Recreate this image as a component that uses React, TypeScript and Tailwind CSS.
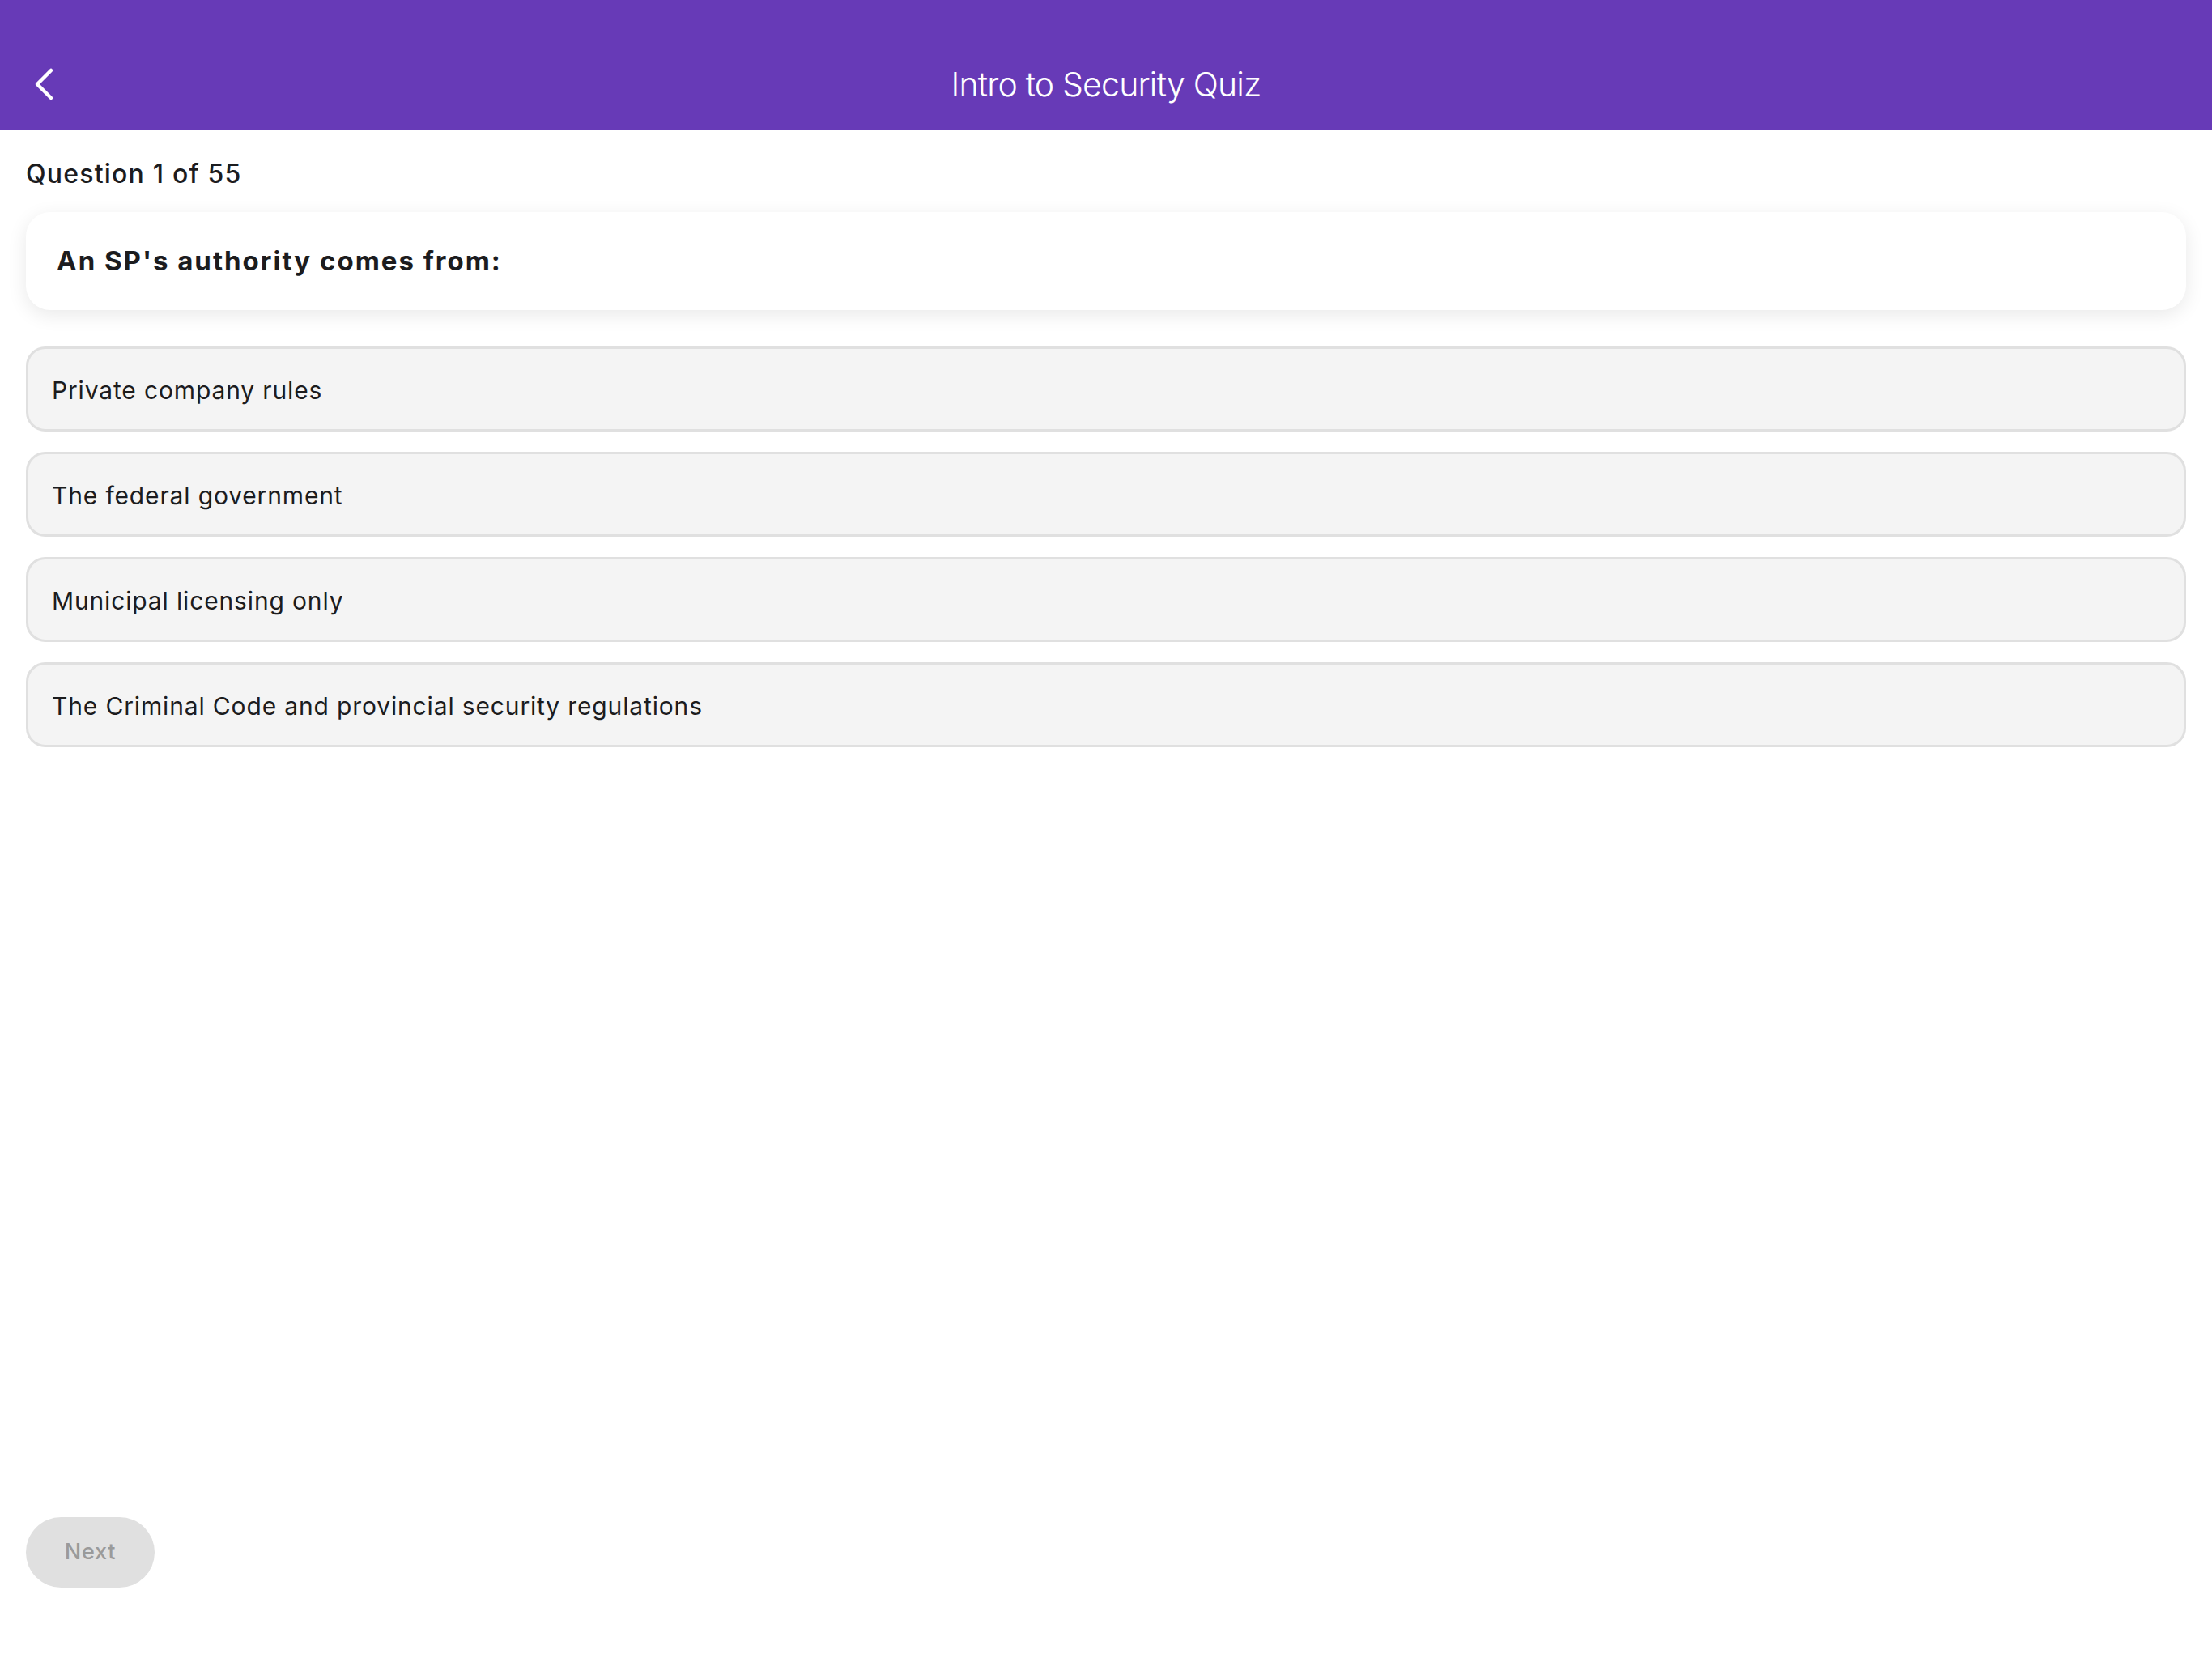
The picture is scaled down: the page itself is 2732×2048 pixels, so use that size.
import { FC } from "react";

const options = [
  "Private company rules",
  "The federal government",
  "Municipal licensing only",
  "The Criminal Code and provincial security regulations",
];

const BackIcon: FC = () => (
  <svg width="28" height="44" viewBox="0 0 28 44" fill="none">
    <path
      d="M21 5 L4 22 L21 39"
      stroke="white"
      strokeWidth="4.5"
      strokeLinecap="round"
      strokeLinejoin="round"
    />
  </svg>
);

const App: FC = () => {
  return (
    <div className="flex h-screen flex-col bg-white font-['Inter',sans-serif] text-[#1c1c1e]">
      <header className="h-[160px] shrink-0 bg-[#673ab7] pt-[50px]">
        <div className="relative flex h-[110px] items-center justify-center">
          <button className="absolute left-[42px] top-[32px]">
            <BackIcon />
          </button>
          <h1 className="text-[41px] font-light tracking-[-0.8px] text-white">
            Intro to Security Quiz
          </h1>
        </div>
      </header>

      <main className="flex flex-1 flex-col px-[32px]">
        <p className="mt-[35px] text-[32px] font-medium leading-[40px] tracking-[1.2px]">
          Question 1 of 55
        </p>

        <div className="mt-[27px] flex h-[121px] items-center rounded-[30px] bg-white px-[38px] shadow-[0_6px_24px_rgba(0,0,0,0.09)]">
          <h2 className="text-[33px] font-bold tracking-[2px]">
            An SP's authority comes from:
          </h2>
        </div>

        <div className="mt-[45px] flex flex-col gap-[25px]">
          {options.map((o) => (
            <button
              key={o}
              className="flex h-[105px] items-center rounded-[24px] border-[3px] border-[#e0e0e0] bg-[#f4f4f4] px-[29px] pt-[3px] text-left text-[30px] tracking-[0.85px] text-[#1c1c1e]"
            >
              {o}
            </button>
          ))}
        </div>

        <div className="flex-1" />

        <div className="mb-[87px]">
          <button
            disabled
            className="flex h-[87px] w-[159px] items-center justify-center rounded-full bg-[#e0e0e0] text-[27px] font-medium tracking-[0.8px] text-[#9a9a9a]"
          >
            Next
          </button>
        </div>
      </main>
    </div>
  );
};

export default App;
